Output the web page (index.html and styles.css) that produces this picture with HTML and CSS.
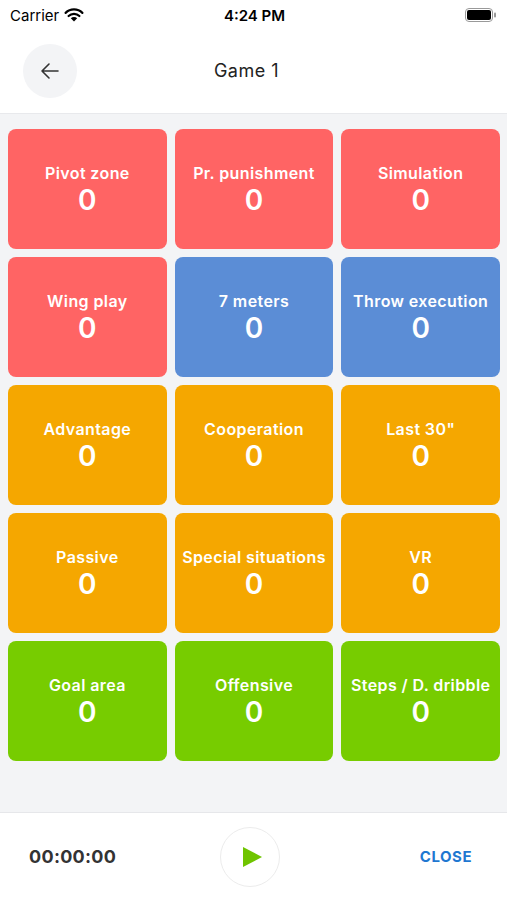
FILE: index.html
```html
<!DOCTYPE html>
<html>
<head>
<meta charset="utf-8">
<link rel="stylesheet" href="styles.css">
</head>
<body>
<div class="app">
  <div class="status">
    <div class="st-left">Carrier
      <svg class="wifi" width="20" height="14" viewBox="0 0 20 14">
        <path d="M10 13.5 L6.8 10.2 A4.6 4.6 0 0 1 13.2 10.2 Z" fill="#000"/>
        <path d="M4.6 8 A7.7 7.7 0 0 1 15.4 8" stroke="#000" stroke-width="2.2" fill="none" stroke-linecap="round"/>
        <path d="M1.6 4.9 A12 12 0 0 1 18.4 4.9" stroke="#000" stroke-width="2.2" fill="none" stroke-linecap="round"/>
      </svg>
    </div>
    <div class="st-time">4:24 PM</div>
    <div class="st-right">
      <svg width="32" height="14" viewBox="0 0 32 14">
        <rect x="0.5" y="0.5" width="27" height="13" rx="3.5" fill="none" stroke="#999" stroke-width="1"/>
        <rect x="2" y="2" width="24" height="10" rx="2" fill="#000"/>
        <rect x="29" y="4.5" width="2" height="5" rx="1" fill="#999"/>
      </svg>
    </div>
  </div>
  <div class="nav">
    <div class="back">
      <svg width="22" height="22" viewBox="0 0 22 22">
        <path d="M19 11 H3 M10 4 L3 11 L10 18" stroke="#333" stroke-width="1.6" fill="none" stroke-linecap="round" stroke-linejoin="round"/>
      </svg>
    </div>
    <div class="title">Game 1</div>
  </div>
  <div class="content">
    <div class="grid">
      <div class="card red"><div class="lbl">Pivot zone</div><div class="num">0</div></div>
      <div class="card red"><div class="lbl">Pr. punishment</div><div class="num">0</div></div>
      <div class="card red"><div class="lbl">Simulation</div><div class="num">0</div></div>
      <div class="card red"><div class="lbl">Wing play</div><div class="num">0</div></div>
      <div class="card blue"><div class="lbl">7 meters</div><div class="num">0</div></div>
      <div class="card blue"><div class="lbl">Throw execution</div><div class="num">0</div></div>
      <div class="card orange"><div class="lbl">Advantage</div><div class="num">0</div></div>
      <div class="card orange"><div class="lbl">Cooperation</div><div class="num">0</div></div>
      <div class="card orange"><div class="lbl">Last 30"</div><div class="num">0</div></div>
      <div class="card orange"><div class="lbl">Passive</div><div class="num">0</div></div>
      <div class="card orange"><div class="lbl">Special situations</div><div class="num">0</div></div>
      <div class="card orange"><div class="lbl">VR</div><div class="num">0</div></div>
      <div class="card green"><div class="lbl">Goal area</div><div class="num">0</div></div>
      <div class="card green"><div class="lbl">Offensive</div><div class="num">0</div></div>
      <div class="card green"><div class="lbl">Steps / D. dribble</div><div class="num">0</div></div>
    </div>
  </div>
  <div class="footer">
    <div class="timer">00:00:00</div>
    <div class="play">
      <svg width="22" height="22" viewBox="0 0 22 22"><path d="M2 1 L21 11 L2 21 Z" fill="#6fc400"/></svg>
    </div>
    <div class="close">CLOSE</div>
  </div>
</div>
</body>
</html>
```

FILE: styles.css
```css
* { box-sizing: border-box; }
html, body { margin: 0; padding: 0; }
body {
  font-family: Inter, "Noto Sans", sans-serif;
  background: #fff;
  width: 507px;
  height: 900px;
  overflow: hidden;
}
.app {
  display: flex;
  flex-direction: column;
  height: 900px;
}
.status {
  height: 30px;
  display: flex;
  align-items: center;
  justify-content: space-between;
  padding: 0 10px 0 10px;
  position: relative;
  font-size: 15px;
  color: #000;
}
.st-left { display: flex; align-items: center; gap: 5px; }
.wifi { margin-top: -1px; }
.st-time {
  position: absolute;
  left: 0; right: 0;
  text-align: center;
  font-weight: 600;
  padding-left: 2px;
}
.st-right { display: flex; align-items: center; }
.nav {
  height: 84px;
  display: flex;
  align-items: center;
  padding: 0 23px;
  position: relative;
  border-bottom: 1px solid #e8e9ec;
}
.back {
  width: 54px;
  height: 54px;
  border-radius: 50%;
  background: #f3f4f6;
  display: flex;
  align-items: center;
  justify-content: center;
  margin-top: -2px;
}
.title {
  position: absolute;
  left: 0; right: 14px;
  text-align: center;
  font-size: 18px;
  letter-spacing: 0.5px;
  color: #222;
  pointer-events: none;
  margin-top: -2px;
}
.content {
  flex: 1;
  background: #f3f4f6;
  padding: 15px 7px 0 8px;
  border-bottom: 1px solid #e6e7ea;
}
.grid {
  display: grid;
  grid-template-columns: repeat(3, 1fr);
  grid-auto-rows: 120px;
  gap: 8px;
}
.card {
  border-radius: 8px;
  display: flex;
  flex-direction: column;
  align-items: center;
  justify-content: center;
  color: #fff;
  padding-top: 1px;
}
.red { background: #ff6464; }
.blue { background: #5b8dd6; }
.orange { background: #f5a700; }
.green { background: #77cc00; }
.lbl {
  font-size: 16px;
  font-weight: 600;
  letter-spacing: 0.4px;
  line-height: 20px;
  white-space: nowrap;
}
.num {
  font-size: 28px;
  font-weight: 600;
  line-height: 34px;
}
.footer {
  height: 87px;
  display: flex;
  align-items: center;
  justify-content: space-between;
  padding: 0 35px 0 29px;
  position: relative;
  background: #fff;
}
.timer {
  font-size: 18px;
  font-weight: 700;
  color: #333;
  letter-spacing: 0.3px;
}
.play {
  position: absolute;
  left: 220px;
  top: 14px;
  width: 60px;
  height: 60px;
  border-radius: 50%;
  border: 1px solid #ececec;
  display: flex;
  align-items: center;
  justify-content: center;
  padding-left: 4px;
}
.close {
  font-size: 15px;
  font-weight: 700;
  color: #1f78d1;
  letter-spacing: 0.5px;
}
```
